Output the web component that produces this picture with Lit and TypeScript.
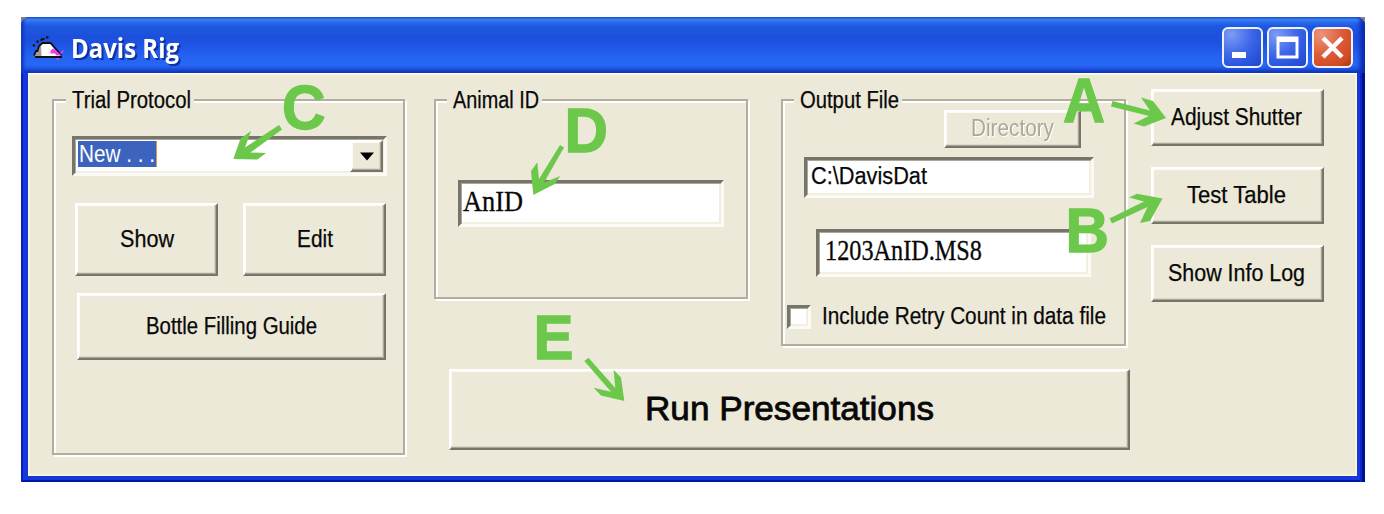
import { LitElement, html, svg, css } from "lit";
import { customElement } from "lit/decorators.js";

// One line of text fitted to a given width, so narrow UI lettering keeps its measure.
const line = (text: string, width: number, cls = "ui", height = 24, baseline = 19) => html`
  <svg class="line" width=${width} height=${height}>
    <text class=${cls} x="0" y=${baseline} textLength=${width} lengthAdjust="spacingAndGlyphs">${text}</text>
  </svg>`;

const arrows = [
  "1112.5,101 1150,110.5 1141,97.5 1153,101 1166,118 1144,126.5 1133.5,123.5 1149,116 1111,106.5",
  "1109.5,218.5 1144,201.500 1129,197.5 1137,193.8 1162.5,198.5 1150,221 1140,223 1147.500,207 1112,223.5",
  "279,125 245,147.5 251,131 240.5,138.5 233.3,159 257.5,159.5 266,153 250.5,152.5 282,129.5",
  "560,145 539,179 537.3,162.3 531,171 533.3,195 554.7,184 560.3,176 544,182.500 564,147.5",
  "588.5,357.7 615.3,388 613.6,369.7 621,377.5 624.3,401 601,395.5 593.6,387.7 611,391.7 584.3,361",
];
const letters: [string, number, number, number][] = [
  ["A", 1063, 121.5, 42], ["B", 1065.5, 251.5, 43.5], ["C", 282, 129, 43.5], ["D", 564.5, 152.3, 43.5], ["E", 533.5, 359, 40],
];

@customElement("app-root")
export class AppRoot extends LitElement {
  static styles = css`
    :host { display: block; position: relative; width: 1384px; height: 514px; background: #fff; overflow: hidden; }
    * { box-sizing: border-box; }
    .line { display: block; overflow: visible; flex: none; }
    .ui { font: 23.5px "Liberation Sans", sans-serif; fill: #080808; stroke: #080808; stroke-width: .25px; }
    .serif { font: 29px "Liberation Serif", serif; fill: #080808; stroke: #080808; stroke-width: .3px; }
    .big { font: 34px "Liberation Sans", sans-serif; fill: #080808; stroke: #080808; stroke-width: .8px; }
    .sel { fill: #fff; stroke: none; }
    .off { fill: #aca899; stroke: none; filter: drop-shadow(1.5px 1.5px 0 #fff); }
    .caption { font: bold 26px "Open Sans", "Noto Sans", sans-serif; fill: #fff; filter: drop-shadow(2px 2px 0 #1032a0); }

    .backdrop { width: 1344px; height: 465px; margin-left: 21px; background: #857f8c; }
    .stage { padding-top: 17px; }
    .window { width: 1344px; height: 465px; border-radius: 9px 9px 0 0; padding: 0 8px 6px 7px;
      display: flex; flex-direction: column; overflow: hidden;
      background: #1537dc; box-shadow: inset 2px 0 #0b20bb, inset -3px 0 #000f96, inset -5px 0 #0b27c2, inset 0 -2px #0016a0; }
    .title { height: 56px; margin: 0 -8px 0 -7px; padding: 10px 12px 0 11px; display: flex;
      background: linear-gradient(#3b85f0 0, #4290f8 4%, #2a6df0 9%, #1f58e2 16%, #1c50da 35%, #1e54e4 50%, #2563f2 70%, #2767f5 86%, #1d52de 93%, #1238b8 100%);
      box-shadow: inset 3px 0 3px #123bc6, inset -5px 0 4px #0c2bb0; }
    .icon { display: block; margin-top: 7px; flex: none; overflow: visible; }
    .title .line { margin: 6px auto 0 7px; }
    .controls { display: flex; gap: 3.5px; }
    .ctl { display: block; width: 41.3px; height: 41px; border: 2px solid #eef2ff; border-radius: 6px;
      background: radial-gradient(circle at 20% 15%, #7d9cf5 0, #4069e8 45%, #2854de 75%, #2048c4 100%); }
    .ctl.close { background: radial-gradient(circle at 20% 15%, #ec9479 0, #dc5a36 50%, #cf4a22 80%, #ac3614 100%); }
    .ctl svg { display: block; }

    .client { flex: 1; background: #ece9d8; box-shadow: inset 0 1px #fff, inset 2px 2px #f8f4d6, inset -2px -2px #fbf6cf;
      padding: 16px 33px 0 24px; display: flex; align-items: flex-start; }
    .group { border: 2px solid #b2ae9f; box-shadow: 2px 2px #fff, inset 2px 2px #fff;
      display: flex; flex-direction: column; align-items: flex-start; flex: none; }
    .legend { background: #ece9d8; margin: -12px 0 0 12px; padding: 0 3px 0 6px; }
    .btn { display: flex; align-items: center; justify-content: center; flex: none; background: #ece9d8;
      border: 2px solid; border-color: #fff #77746a #77746a #fff;
      box-shadow: inset -1px -1px #a9a598, inset -2px -2px #dcd8c8, inset 1px 1px #fbfaf4; }
    .field { display: flex; flex: none; background: #fff; border: 3px solid; border-color: #77746a #fbfaf5 #fbfaf5 #77746a;
      box-shadow: inset 1px 1px #aaa79c, inset -2px -2px #f1efe2; }

    .trial { width: 353px; height: 356px; margin-top: 10px; }
    .combo { width: 315px; height: 40px; margin: 23px 0 0 18px; padding: 1px 1px 1px 3px; justify-content: space-between; }
    .chosen { background: #3c63be; height: 26px; margin-top: 1px; padding: 2px 1px 0 1px; border-right: 1px solid #d89a4a; }
    .drop { width: 33px; height: 32px; }
    .pair { display: flex; gap: 25px; margin: 27px 0 0 21px; }
    .half { width: 143px; height: 73px; }
    .guide { width: 309px; height: 67px; margin: 17px 0 0 23px; }

    .center { margin: 10px 0 0 29px; width: 696px; }
    .groups { display: flex; gap: 33px; align-items: flex-start; }
    .animal { width: 314px; height: 200px; }
    .animal .legend, .output .legend { margin-left: 11px; }
    .anid { width: 266px; height: 47px; margin: 67px 0 0 22px; padding: 2px 0 0 2px; }
    .output { width: 345px; height: 247px; }
    .dir { width: 137px; height: 38px; margin: -3px 0 0 161px; }
    .path { width: 290px; height: 41px; margin: 9px 0 0 21px; padding: 5px 0 0 4px; }
    .name { width: 275px; height: 48px; margin: 31px 0 0 33px; padding: 2px 0 0 6px; }
    .check { display: flex; align-items: center; margin: 28px 0 0 4px; gap: 11px; }
    .box { width: 24px; height: 24px; }
    .run { width: 681px; height: 81px; margin: 23px 0 0 15px; }

    .side { display: flex; flex-direction: column; gap: 21px; margin-left: auto; }
    .side .btn { width: 173px; height: 57px; padding-right: 2px; }

    .notes { position: absolute; left: 0; top: 0; pointer-events: none; fill: #6cc84a; }
    .notes text { font: bold 63px "Liberation Sans", sans-serif; stroke: #6cc84a; stroke-width: 1.3px; }
  `;

  render() {
    return html`
      <div class="stage"><div class="backdrop"><div class="window">
        <header class="title">
          <svg class="icon" width="32" height="26" viewBox="0 0 32 26">
            <path d="M3 22 L7 12 L11 9.500 H18 L29 22Z" fill="#fff"/>
            <path d="M3 21 L7 12 L9 11 L9.500 22 H3Z" fill="#a89c92"/>
            <path d="M2 21.500 L4 17 H5.500 L7 12 L10.500 9 H18.500 L29.500 21.500" fill="none" stroke="#111" stroke-width="1.8"/>
            <path d="M3 23 H30" stroke="#111" stroke-width="2"/>
            <path d="M.8 10.200h2.200v2.200h-2.200zM4.500 6.500h2.200v2.200h-2.200zM8.500 4.500h2.200v2.200h-2.200zM10.500 4h2v2h-2zM14 2.200h2.400v2.200h-2.400z" fill="#111"/>
            <path d="M18.500 16.500l3-2 3 2.500 5 4.500h-5l-1.500-2h-4.500zM28 19l3-3 1 1-3 3zM24.500 24h2.500v1.500h-2.500z" fill="#ea3cea"/>
          </svg>
          ${line("Davis Rig", 108, "caption", 32, 24.5)}
          <div class="controls">
            <div class="ctl"><svg width="37" height="37"><path d="M8 23h14v6H8z" fill="#fff"/></svg></div>
            <div class="ctl"><svg width="37" height="37"><path d="M7.500 7.500h22v22h-22z M10.500 13h16v13.500h-16z" fill="#fff" fill-rule="evenodd"/></svg></div>
            <div class="ctl close"><svg width="37" height="37"><path d="M9 9L28 28M28 9L9 28" stroke="#fff" stroke-width="4.500"/></svg></div>
          </div>
        </header>
        <main class="client">
          <section class="group trial">
            <div class="legend">${line("Trial Protocol", 119)}</div>
            <div class="field combo">
              <div class="chosen">${line("New . . .", 76, "ui sel")}</div>
              <div class="btn drop"><svg width="16" height="10"><path d="M1 1.500h14l-7 8z" fill="#000"/></svg></div>
            </div>
            <div class="pair">
              <div class="btn half">${line("Show", 54)}</div>
              <div class="btn half">${line("Edit", 36)}</div>
            </div>
            <div class="btn guide">${line("Bottle Filling Guide", 171)}</div>
          </section>
          <div class="center">
            <div class="groups">
              <section class="group animal">
                <div class="legend">${line("Animal ID", 86)}</div>
                <div class="field anid">${line("AnID", 60, "serif", 34, 26)}</div>
              </section>
              <section class="group output">
                <div class="legend">${line("Output File", 99)}</div>
                <div class="btn dir">${line("Directory", 83, "ui off")}</div>
                <div class="field path">${line("C:\\DavisDat", 116)}</div>
                <div class="field name">${line("1203AnID.MS8", 157, "serif", 34, 26)}</div>
                <div class="check"><div class="field box"></div>${line("Include Retry Count in data file", 284)}</div>
              </section>
            </div>
            <div class="btn run">${line("Run Presentations", 289, "big", 34, 27)}</div>
          </div>
          <nav class="side">
            <div class="btn">${line("Adjust Shutter", 131)}</div>
            <div class="btn">${line("Test Table", 99)}</div>
            <div class="btn">${line("Show Info Log", 137)}</div>
          </nav>
        </main>
      </div></div></div>
      <svg class="notes" width="1384" height="514">
        ${arrows.map((p) => svg`<polygon points=${p} />`)}
        ${letters.map(([t, x, y, w]) => svg`<text x=${x} y=${y} textLength=${w} lengthAdjust="spacingAndGlyphs">${t}</text>`)}
      </svg>`;
  }
}
